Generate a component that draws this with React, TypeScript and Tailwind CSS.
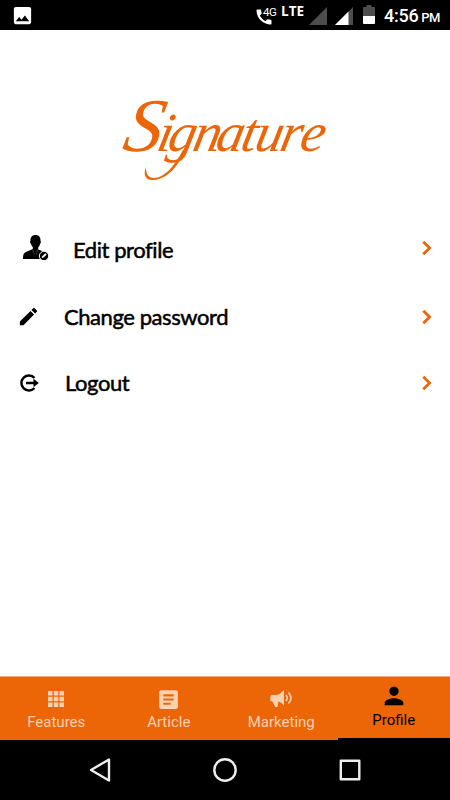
import type { ReactNode } from 'react'
import { MdArticle, MdCall, MdEdit, MdPerson, MdPhoto } from 'react-icons/md'

function SignalIcon({ level }: { level: number }) {
  return (
    <svg width="18" height="18" viewBox="0 0 18 18">
      <path d="M18 0v18H0z" fill="#4d4d4d" />
      {level > 0 && <path d={`M${level} ${18 - level}V18H0z`} fill="#fff" />}
    </svg>
  )
}

function StatusBar() {
  return (
    <header className="flex h-[30px] shrink-0 items-center bg-black pl-[11px] pr-[10px] text-white">
      <MdPhoto size={23} />
      <div className="ml-auto flex h-full items-start">
        <div className="flex w-[25px] pt-[7px]">
          <MdCall size={20} className="-ml-0.5 shrink-0" />
          <span className="-ml-[11px] -mt-[3px] font-['Roboto',sans-serif] text-[11.5px] leading-[16px] tracking-[-0.5px]">4G</span>
        </div>
        <span className="mt-[3px] w-[25px] font-['Open_Sans',sans-serif] text-[13.5px] font-bold leading-4">LTE</span>
        <div className="ml-[3px] flex gap-[8px] pt-[7px]">
          <SignalIcon level={0} />
          <SignalIcon level={13.5} />
        </div>
        <svg width="12" height="19" viewBox="0 0 12 19" className="ml-[10px] mt-[5px]">
          <path d="M1 2h2.5V0h5v2H11q1 0 1 1v8H0V3q0-1 1-1z" fill="#4d4d4d" />
          <path d="M0 11h12v7q0 1-1 1H1q-1 0-1-1z" fill="#fff" />
        </svg>
        <div className="ml-[9px] flex items-baseline whitespace-nowrap pt-[4px] font-['Roboto',sans-serif] font-medium">
          <span className="text-[18px] leading-6 tracking-[-0.3px]">4:56</span>
          <span className="ml-[3px] text-[13px] tracking-[-0.5px]">PM</span>
        </div>
      </div>
    </header>
  )
}

function Logo() {
  return (
    <svg width="220" height="100" viewBox="0 0 220 100" className="ml-[115px] mt-[60px] shrink-0 overflow-visible" fill="#ec6608">
      <g transform="translate(0 61) skewX(-12)">
        <text fontFamily="'Liberation Serif', serif" fontStyle="italic">
          <tspan x="6" fontSize="76">S</tspan>
          <tspan x="40 51 76 99 124 138 163 183" fontSize="55">ignature</tspan>
        </text>
      </g>
      {/* swash under the g */}
      <path d="M68 60C59 77 49 88 39 88c-6 0-8-4-8-11-3 7-1 14 8 13 13-1 24-13 31-30z" />
    </svg>
  )
}

function EditProfileIcon() {
  return (
    <svg width="26" height="26" viewBox="0 0 26 26">
      <path d="M12.5 0c3.7 0 5.2 2.5 5 6 .7.4.5 2.2-.5 2.900-.3 1.600-1 2.700-1.800 3.500v2l6 2.400 2 7.200H0c0-3.800.4-6 3-7L9.800 14v-2C9 11.200 8.300 10 8 8.900c-1-.7-1.200-2.500-.5-2.900C7.200 2.500 8.800 0 12.500 0z" />
      <path d="M9.800 14.500l1.600 5M14.800 14.500l-1.500 5" stroke="#666" strokeWidth=".6" />
      <circle cx="21" cy="21" r="4.700" stroke="#fff" />
      <path d="M18.700 23l.6-1.800 3-3 1.300 1.300-3 3z" fill="#fff" />
    </svg>
  )
}

function LogoutIcon() {
  return (
    <svg width="19" height="18" viewBox="0 0 19 18" fill="none" stroke="#000" strokeWidth="2.5">
      <path d="M14.500 4A7.500 7.500 0 1 0 14.500 14M6 9h10" />
      <path d="M13.500 4.800L18.800 9l-5.300 4.200z" fill="#000" stroke="none" />
    </svg>
  )
}

function ChevronIcon() {
  return (
    <svg width="10" height="16" viewBox="0 0 10 16" fill="none" stroke="#ec6608" strokeWidth="2.8" className="ml-auto">
      <path d="M1.300 1.700L7.600 8l-6.300 6.300" />
    </svg>
  )
}

function FeaturesIcon() {
  return (
    <svg width="16" height="16" viewBox="0 0 16 16" fill="currentColor">
      <path d="M0 0h4.500v4.500H0zM5.800 0h4.500v4.500H5.800zM11.500 0H16v4.500h-4.500zM0 5.800h4.500v4.500H0zM5.800 5.800h4.500v4.500H5.800zM11.500 5.800H16v4.500h-4.500zM0 11.500h4.500V16H0zM5.800 11.500h4.500V16H5.800zM11.500 11.500H16V16h-4.500z" />
    </svg>
  )
}

function MegaphoneIcon() {
  return (
    <svg width="24" height="20" viewBox="0 0 24 20" fill="currentColor">
      <path d="M2 6h5c3 0 5.500-2.500 8-5v15.500c-2-2-3.500-3.500-5.500-4L8.500 18H6.300L3.500 12.500 1.500 12q-1-3 .5-6z" />
      <path d="M17 6q2.500 3 0 6M19.500 3.500q5 5.500 0 11" fill="none" stroke="currentColor" strokeWidth="1.700" />
    </svg>
  )
}

interface MenuRowProps {
  icon: ReactNode
  label: string
  className: string
}

function MenuRow({ icon, label, className }: MenuRowProps) {
  return (
    <button className={`flex w-full items-center pr-[18px] text-left ${className}`}>
      {icon}
      <span className="font-['Lato',sans-serif] leading-[28px] [-webkit-text-stroke:0.5px_#000]">{label}</span>
      <ChevronIcon />
    </button>
  )
}

const tabs = [
  { label: 'Features', icon: <FeaturesIcon /> },
  { label: 'Article', icon: <MdArticle size={25} /> },
  { label: 'Marketing', icon: <MegaphoneIcon /> },
  { label: 'Profile', icon: <MdPerson size={28} />, active: true },
]

export default function App() {
  return (
    <div className="flex h-[800px] w-[450px] flex-col overflow-hidden bg-white text-black">
      <StatusBar />
      <Logo />

      <nav className="mt-[24px] flex flex-col text-[22px] tracking-[-0.43px]">
        <MenuRow icon={<EditProfileIcon />} label="Edit profile" className="mb-[2px] h-[67px] gap-[24px] pl-[23px] [&>span]:pt-[4px]" />
        <MenuRow icon={<MdEdit size={23} />} label="Change password" className="h-[67px] gap-[24px] pl-[17px]" />
        <MenuRow icon={<LogoutIcon />} label="Logout" className="h-[66px] gap-[26px] pl-[20px]" />
      </nav>

      <footer className="mt-auto grid h-[64px] shrink-0 grid-cols-4 border-t border-[#f3a878] bg-[#ec6608] font-['Roboto',sans-serif] text-[15px]">
        {tabs.map((tab) => (
          <div
            key={tab.label}
            className={`flex flex-col items-center ${
              tab.active ? 'border-b-2 border-black pt-[5px] text-black' : 'pt-[8px] text-[#fbd0b3]'
            }`}
          >
            <div className="flex h-[28px] items-center">{tab.icon}</div>
            <span className={tab.active ? 'leading-[20px]' : 'leading-[18px]'}>{tab.label}</span>
          </div>
        ))}
      </footer>

      <div className="flex h-[60px] shrink-0 items-center bg-black">
        <svg width="450" height="60" viewBox="0 0 450 60" fill="none" stroke="#eee" strokeWidth="2.4" strokeLinejoin="round">
          <path d="M109 19.500v21L91 30z" />
          <circle cx="225" cy="30" r="10.700" />
          <path d="M340.800 20.800h18.500v18.500h-18.500z" />
        </svg>
      </div>
    </div>
  )
}
